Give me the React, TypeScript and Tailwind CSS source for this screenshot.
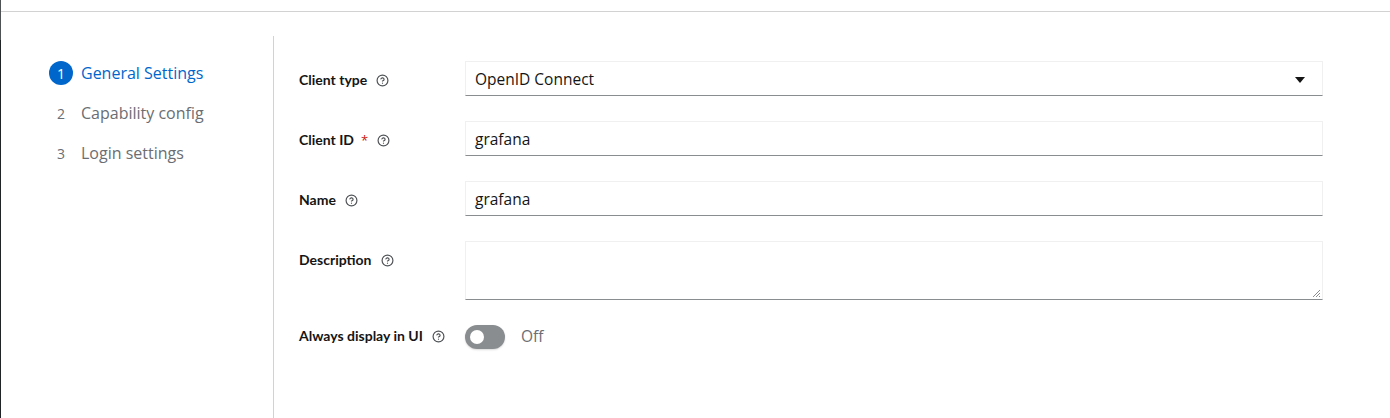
import { CircleHelp } from "lucide-react";

const Help = () => (
  <CircleHelp className="w-[13px] h-[13px] text-[#4f5255]" strokeWidth={2.2} />
);

const navItems = ["General Settings", "Capability config", "Login settings"];

// --- FORM ROW ---
const Row = ({
  label,
  required,
  children,
  labelPad = "pt-[11px]",
}: {
  label: string;
  required?: boolean;
  children: React.ReactNode;
  labelPad?: string;
}) => (
  <div className="flex">
    <div className={`w-[166px] shrink-0 flex items-center gap-[9px] h-fit ${labelPad}`}>
      <span className="text-[14px] font-bold text-[#151515] leading-[16px] font-['Lato',sans-serif]">{label}</span>
      {required && <span className="text-[#c9190b] text-[13px] leading-[16px] -ml-0.5">*</span>}
      <Help />
    </div>
    <div className="flex-1">{children}</div>
  </div>
);

const Input = ({ value }: { value: string }) => (
  <div className="h-[35px] border border-[#f0f0f0] border-b-[#8a8d90] px-[9px] pt-[2px] flex items-center text-[15.5px] text-[#151515]">
    {value}
  </div>
);

const App = () => {
  return (
    <div className="flex h-[418px] w-full bg-white" style={{ fontFamily: "'Open Sans', 'Liberation Sans', sans-serif" }}>
      {/* left edge strip */}
      <div className="w-px flex flex-col shrink-0">
        <div className="h-10 bg-[#4f5255]" />
        <div className="flex-1 bg-[#212427]" />
      </div>

      <div className="flex-1 flex flex-col">
        <div className="h-3 shrink-0 border-b border-[#d2d2d2]" />

        <div className="flex flex-1">
          {/* Wizard nav */}
          <div className="w-[273px] mt-6 border-r border-[#d2d2d2] pl-12 pt-[25px]">
            <div className="flex flex-col gap-4">
              {navItems.map((item, i) => (
                <div key={item} className="flex items-center h-6">
                  {i === 0 ? (
                    <span className="w-6 h-6 rounded-full bg-[#0066cc] text-white text-[14px] flex items-center justify-center">
                      1
                    </span>
                  ) : (
                    <span className="w-6 h-6 text-[#6a6e73] text-[14px] flex items-center justify-center">{i + 1}</span>
                  )}
                  <span className={`ml-2 text-[16px] ${i === 0 ? "text-[#0066cc]" : "text-[#6a6e73]"}`}>{item}</span>
                </div>
              ))}
            </div>
          </div>

          {/* Form */}
          <div className="flex-1 pl-[25px] pr-[67px] pt-[49px] flex flex-col gap-[25px]">
            <Row label="Client type">
              <div className="h-[35px] border border-[#f0f0f0] border-b-[#8a8d90] pl-[9px] pr-4 pt-[2px] flex items-center justify-between text-[15.5px] text-[#151515]">
                <span>OpenID Connect</span>
                <svg width="12" height="8" viewBox="0 0 12 8" className="text-[#151515]">
                  <path d="M1 1h10L6 7z" fill="currentColor" />
                </svg>
              </div>
            </Row>
            <Row label="Client ID" required>
              <Input value="grafana" />
            </Row>
            <Row label="Name">
              <Input value="grafana" />
            </Row>
            <Row label="Description">
              <div className="h-[59px] border border-[#f0f0f0] border-b-[#8a8d90] relative">
                <svg width="9" height="9" viewBox="0 0 9 9" className="absolute right-[1px] bottom-[1px]">
                  <path d="M8 1L1 8M8 4L4 8M8 7L7 8" stroke="#8a8d90" strokeWidth="1" />
                </svg>
              </div>
            </Row>
            <Row label="Always display in UI" labelPad="pt-[3px]">
              <div className="flex items-center gap-4">
                <div className="w-10 h-6 rounded-full bg-[#8a8d90] flex items-center pl-[5px] shadow-[0_1px_2px_rgba(0,0,0,0.15)]">
                  <div className="w-[14px] h-[14px] rounded-full bg-white" />
                </div>
                <span className="text-[15.5px] text-[#6a6e73]">Off</span>
              </div>
            </Row>
          </div>
        </div>
      </div>
    </div>
  );
};

export default App;
